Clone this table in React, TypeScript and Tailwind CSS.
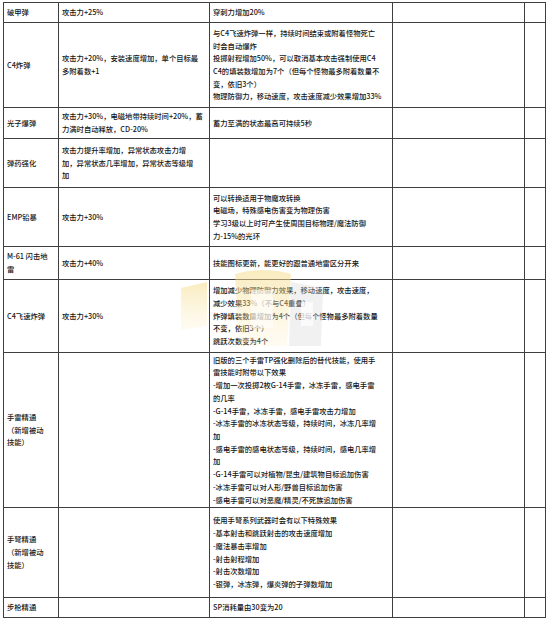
import React from "react";

type Row = { name: string[]; a: string[]; b: string[] };

const rows: Row[] = [
  { name: ["破甲弹"], a: ["攻击力+25%"], b: ["穿刺力增加20%"] },
  {
    name: ["C4炸弹"],
    a: ["攻击力+20%，安装速度增加，单个目标最", "多附着数+1"],
    b: [
      "与C4飞速炸弹一样，持续时间结束或附着怪物死亡",
      "时会自动爆炸",
      "投掷射程增加50%，可以取消基本攻击强制使用C4",
      "C4的填装数增加为7个（但每个怪物最多附着数量不",
      "变，依旧3个）",
      "物理防御力，移动速度，攻击速度减少效果增加33%",
    ],
  },
  {
    name: ["光子爆弹"],
    a: ["攻击力+30%，电磁地带持续时间+20%，蓄", "力满时自动释放，CD-20%"],
    b: ["蓄力至满的状态最高可持续5秒"],
  },
  {
    name: ["弹药强化"],
    a: ["攻击力提升率增加，异常状态攻击力增", "加，异常状态几率增加，异常状态等级增", "加"],
    b: [],
  },
  {
    name: ["EMP铅暴"],
    a: ["攻击力+30%"],
    b: [
      "可以转换适用于物魔攻转换",
      "电磁场，特殊感电伤害变为物理伤害",
      "学习3级以上时可产生使周围目标物理/魔法防御",
      "力-15%的光环",
    ],
  },
  {
    name: ["M-61 闪击地", "雷"],
    a: ["攻击力+40%"],
    b: ["技能图标更新，能更好的跟普通地雷区分开来"],
  },
  {
    name: ["C4飞速炸弹"],
    a: ["攻击力+30%"],
    b: [
      "增加减少物理防御力效果，移动速度，攻击速度，",
      "减少效果33%（不与C4重叠）",
      "炸弹填装数量增加为4个（但每个怪物最多附着数量",
      "不变，依旧3个）",
      "跳跃次数变为4个",
    ],
  },
  {
    name: ["手雷精通", "（新增被动", "技能）"],
    a: [],
    b: [
      "旧版的三个手雷TP强化删除后的替代技能，使用手",
      "雷技能时附带以下效果",
      "-增加一次投掷2枚G-14手雷，冰冻手雷，感电手雷",
      "的几率",
      "-G-14手雷，冰冻手雷，感电手雷攻击力增加",
      "-冰冻手雷的冰冻状态等级，持续时间，冰冻几率增",
      "加",
      "-感电手雷的感电状态等级，持续时间，感电几率增",
      "加",
      "-G-14手雷可以对植物/昆虫/建筑物目标追加伤害",
      "-冰冻手雷可以对人形/野兽目标追加伤害",
      "-感电手雷可以对恶魔/精灵/不死族追加伤害",
    ],
  },
  {
    name: ["手弩精通", "（新增被动", "技能）"],
    a: [],
    b: [
      "使用手弩系列武器时会有以下特殊效果",
      "-基本射击和跳跃射击的攻击速度增加",
      "-魔法暴击率增加",
      "-射击射程增加",
      "-射击次数增加",
      "-银弹，冰冻弹，爆炎弹的子弹数增加",
    ],
  },
  { name: ["步枪精通"], a: [], b: ["SP消耗量由30变为20"] },
];

function Cell({ lines }: { lines: string[] }) {
  return (
    <div className="bg-white flex flex-col justify-center pl-[3px] overflow-hidden">
      {lines.map((l, i) => (
        <div key={i} className="whitespace-nowrap leading-[12.7px]">
          {l}
        </div>
      ))}
    </div>
  );
}

export default function App() {
  return (
    <div
      className="w-[550px] h-[619px] bg-white text-[#161616] text-[7.3px] font-medium overflow-hidden"
      style={{ fontFamily: '"Noto Sans CJK SC", "Noto Sans", sans-serif' }}
    >
      <div className="relative ml-[3px] pt-[2px] w-[543px]">
        <div className="grid grid-cols-[54px_150px_182px_131px_20px] grid-rows-[19px_84px_30px_48px_58px_32px_72px_154px_89px_19px] gap-px p-px bg-[#3f3f3f]">
          {rows.map((r, i) => (
            <React.Fragment key={i}>
              <Cell lines={r.name} />
              <Cell lines={r.a} />
              <Cell lines={r.b} />
              <div className="bg-white" />
              <div className="bg-white" />
            </React.Fragment>
          ))}
        </div>
        <svg
          className="absolute left-[170px] top-[266px] pointer-events-none"
          width="180"
          height="86"
          viewBox="0 0 180 86"
        >
          <defs>
            <linearGradient id="wy" x1="0" y1="0" x2="0" y2="1">
              <stop offset="0" stopColor="#f6dc8a" stopOpacity="0.55" />
              <stop offset="1" stopColor="#fbecc0" stopOpacity="0.2" />
            </linearGradient>
          </defs>
          <path d="M8 22 L34 16 L34 60 L8 64 Z" fill="url(#wy)" />
          <path d="M62 8 Q90 0 118 8 L114 80 L66 80 Z" fill="url(#wy)" />
          <path d="M78 24 L100 24 L100 62 L78 62 Z" fill="#ffffff" fillOpacity="0.6" />
          <path d="M118 16 L150 22 L148 80 L116 80 Z" fill="#d8d8d8" fillOpacity="0.35" />
          <path d="M128 36 L140 36 L140 60 L128 60 Z" fill="#ffffff" fillOpacity="0.7" />
        </svg>
      </div>
    </div>
  );
}
